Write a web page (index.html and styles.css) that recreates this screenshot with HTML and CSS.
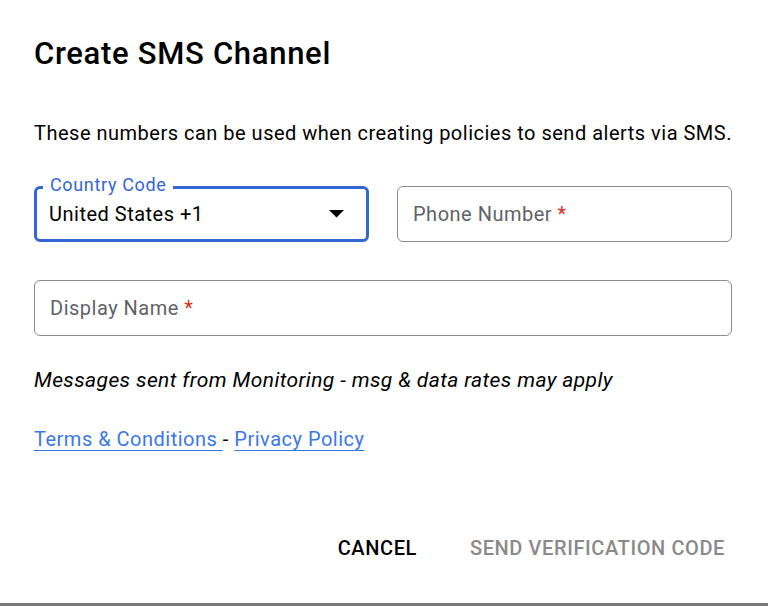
FILE: index.html
```html
<!DOCTYPE html>
<html lang="en">
<head>
<meta charset="utf-8">
<title>Create SMS Channel</title>
<link rel="stylesheet" href="styles.css">
</head>
<body>
<div class="dialog">
  <h1 class="title">Create SMS Channel</h1>
  <p class="intro">These numbers can be used when creating policies to send alerts via SMS.</p>
  <div class="row">
    <div class="field field-focused">
      <span class="float-label">Country Code</span>
      <span class="value">United States +1</span>
      <svg class="caret" width="15" height="8" viewBox="0 0 15 8"><path d="M0 0 H15 L7.5 7.5 Z" fill="#000"/></svg>
    </div>
    <div class="field">
      <span class="placeholder">Phone Number <span class="req">*</span></span>
    </div>
  </div>
  <div class="row row-single">
    <div class="field">
      <span class="placeholder">Display Name <span class="req">*</span></span>
    </div>
  </div>
  <p class="note">Messages sent from Monitoring - msg &amp; data rates may apply</p>
  <p class="links"><a href="#" class="link">Terms &amp; Conditions </a> - <a href="#" class="link">Privacy Policy</a></p>
  <div class="actions">
    <button class="btn btn-cancel">CANCEL</button>
    <button class="btn btn-send">SEND VERIFICATION CODE</button>
  </div>
</div>
</body>
</html>
```
FILE: styles.css
```css
html, body {
  margin: 0;
  padding: 0;
  background: #fff;
}
body {
  font-family: Roboto, "Liberation Sans", Arial, sans-serif;
  color: #202124;
  letter-spacing: 0.5px;
}
.dialog {
  box-sizing: border-box;
  height: 606px;
  padding: 36px 36px 0 34px;
  border-bottom: 3px solid #7a7a7a;
  overflow: hidden;
}
.title {
  margin: 0;
  font-size: 31px;
  line-height: 36px;
  font-weight: 500;
  letter-spacing: 0.7px;
  color: #000;
}
.intro {
  margin: 49px 0 0;
  font-size: 20px;
  line-height: 24px;
  color: #000;
  white-space: nowrap;
}
.row {
  display: grid;
  grid-template-columns: 335px 335px;
  column-gap: 28px;
  margin-top: 41px;
}
.row-single {
  grid-template-columns: 698px;
  margin-top: 38px;
}
.field {
  position: relative;
  box-sizing: border-box;
  height: 56px;
  border: 1.5px solid #8c8c8c;
  border-radius: 6px;
  padding: 0 15px;
  display: flex;
  align-items: center;
  font-size: 20px;
  line-height: 24px;
}
.field-focused {
  border: 3px solid #3367d6;
  padding: 0 22px 0 12px;
  justify-content: space-between;
}
.float-label {
  position: absolute;
  top: -14px;
  left: 6px;
  padding: 0 7px;
  background: #fff;
  color: #3367d6;
  font-size: 18px;
  line-height: 20px;
  letter-spacing: 0.65px;
}
.value {
  color: #000;
}
.caret {
  display: block;
}
.placeholder {
  color: #5f6368;
}
.req {
  color: #d93025;
}
.note {
  margin: 32px 0 0;
  font-size: 21px;
  line-height: 24px;
  font-style: italic;
  letter-spacing: 0.38px;
  color: #000;
}
.links {
  margin: 35px 0 0;
  font-size: 20px;
  line-height: 24px;
  color: #000;
}
.link {
  color: #3b78e7;
  text-decoration: underline;
  text-decoration-thickness: 1px;
  text-underline-offset: 4px;
}
.actions {
  display: flex;
  justify-content: flex-end;
  gap: 53px;
  margin-top: 85px;
  padding-right: 7px;
}
.btn {
  border: none;
  background: none;
  padding: 0;
  font-family: Roboto, "Liberation Sans", Arial, sans-serif;
  font-size: 20px;
  line-height: 24px;
  font-weight: 500;
  letter-spacing: 0.6px;
  cursor: pointer;
}
.btn-cancel {
  color: #000;
}
.btn-send {
  color: #8a8a8a;
}
```
